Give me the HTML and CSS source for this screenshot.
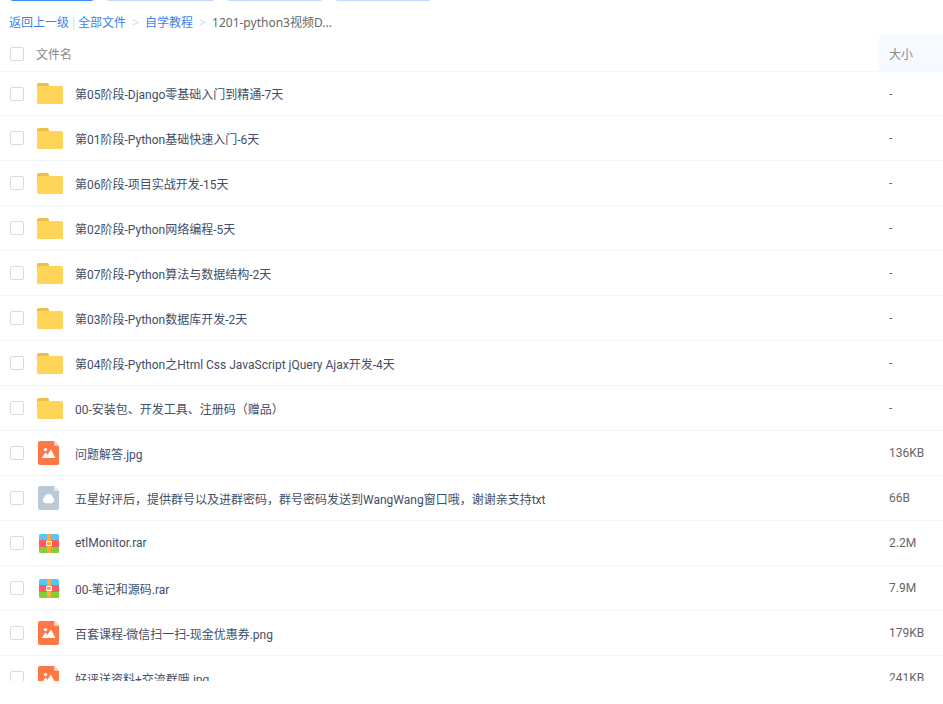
FILE: index.html
```html
<!DOCTYPE html>
<html lang="zh-CN">
<head>
  <meta charset="utf-8">
  <title>自学教程</title>
  <link rel="stylesheet" href="styles.css">
</head>
<body>
  <svg class="sprite" aria-hidden="true">
    <symbol id="folder" viewBox="0 0 26 21">
      <path fill="#eebf47" d="M0 6V1.500Q0 0 1.500 0H10.500Q12 0 12 1.500V6z"/>
      <rect width="26" height="18" y="3" rx="1.500" fill="#ffd559"/>
    </symbol>
    <symbol id="image" viewBox="0 0 21 24">
      <path fill="#ff7744" d="M2 0H16L21 5V22Q21 24 19 24H2Q0 24 0 22V2Q0 0 2 0z"/>
      <path fill="#ffc9b4" d="M16 0L21 5H17.500Q16 5 16 3.500z"/>
      <circle cx="7.500" cy="8.600" r="1.700" fill="#fff"/>
      <path fill="#fff" d="M3.600 17L7.500 11.500L9.500 13.700L13 8.500L17.400 17z"/>
    </symbol>
    <symbol id="cloud" viewBox="0 0 21 24">
      <path fill="#b9c9d6" d="M2 0H16L21 5V22Q21 24 19 24H2Q0 24 0 22V2Q0 0 2 0z"/>
      <path fill="#e3eaef" d="M16 0L21 5H17.500Q16 5 16 3.500z"/>
      <path fill="#fff" d="M8 17.200A3.200 3.200 0 0 1 6.400 11.200A4.200 4.200 0 0 1 14.600 11.200A3.200 3.200 0 0 1 13 17.200z"/>
    </symbol>
    <symbol id="rar" viewBox="0 0 20 19">
      <path fill="#55c7f7" d="M1.500 0H18.500Q20 0 20 1.500V6H0V1.500Q0 0 1.500 0z"/>
      <path fill="#ff5c5c" d="M0 6H20V13H0z"/>
      <path fill="#82cf3a" d="M0 13H20V17.500Q20 19 18.500 19H1.500Q0 19 0 17.500z"/>
      <path fill="#ffab3d" d="M8 0H12V19H8z"/>
      <path fill="#ffab3d" stroke="#fff" d="M7.500 7.500H12.500V11.500H7.500z"/>
    </symbol>
  </svg>

  <div class="toolbar">
    <button class="btn btn-primary" aria-label="上传"></button>
    <button class="btn btn-wide" aria-label="新建文件夹"></button>
    <button class="btn" aria-label="离线下载"></button>
    <button class="btn" aria-label="我的设备"></button>
  </div>

  <nav class="breadcrumb">
    <a href="#">返回上一级</a>
    <span class="divider">|</span>
    <a href="#">全部文件</a>
    <span class="arrow">&gt;</span>
    <a href="#">自学教程</a>
    <span class="arrow">&gt;</span>
    <span class="current">1201-python3视频D...</span>
  </nav>

  <div class="list">
    <table class="files">
      <thead>
        <tr>
          <th class="check"><input type="checkbox" aria-label="全选"></th>
          <th class="title">文件名</th>
          <th class="size">大小</th>
        </tr>
      </thead>
      <tbody>
        <tr>
          <td class="check"><input type="checkbox" id="f1"></td>
          <td><label class="name" for="f1"><svg class="icon folder"><use href="#folder"/></svg>第05阶段-Django零基础入门到精通-7天</label></td>
          <td class="size">-</td>
        </tr>
        <tr>
          <td class="check"><input type="checkbox" id="f2"></td>
          <td><label class="name" for="f2"><svg class="icon folder"><use href="#folder"/></svg>第01阶段-Python基础快速入门-6天</label></td>
          <td class="size">-</td>
        </tr>
        <tr>
          <td class="check"><input type="checkbox" id="f3"></td>
          <td><label class="name" for="f3"><svg class="icon folder"><use href="#folder"/></svg>第06阶段-项目实战开发-15天</label></td>
          <td class="size">-</td>
        </tr>
        <tr>
          <td class="check"><input type="checkbox" id="f4"></td>
          <td><label class="name" for="f4"><svg class="icon folder"><use href="#folder"/></svg>第02阶段-Python网络编程-5天</label></td>
          <td class="size">-</td>
        </tr>
        <tr>
          <td class="check"><input type="checkbox" id="f5"></td>
          <td><label class="name" for="f5"><svg class="icon folder"><use href="#folder"/></svg>第07阶段-Python算法与数据结构-2天</label></td>
          <td class="size">-</td>
        </tr>
        <tr>
          <td class="check"><input type="checkbox" id="f6"></td>
          <td><label class="name" for="f6"><svg class="icon folder"><use href="#folder"/></svg>第03阶段-Python数据库开发-2天</label></td>
          <td class="size">-</td>
        </tr>
        <tr>
          <td class="check"><input type="checkbox" id="f7"></td>
          <td><label class="name" for="f7"><svg class="icon folder"><use href="#folder"/></svg>第04阶段-Python之Html Css JavaScript jQuery Ajax开发-4天</label></td>
          <td class="size">-</td>
        </tr>
        <tr>
          <td class="check"><input type="checkbox" id="f8"></td>
          <td><label class="name" for="f8"><svg class="icon folder"><use href="#folder"/></svg>00-安装包、开发工具、注册码（赠品）</label></td>
          <td class="size">-</td>
        </tr>
        <tr>
          <td class="check"><input type="checkbox" id="f9"></td>
          <td><label class="name" for="f9"><svg class="icon file"><use href="#image"/></svg>问题解答.jpg</label></td>
          <td class="size">136KB</td>
        </tr>
        <tr>
          <td class="check"><input type="checkbox" id="f10"></td>
          <td><label class="name" for="f10"><svg class="icon file"><use href="#cloud"/></svg>五星好评后，提供群号以及进群密码，群号密码发送到WangWang窗口哦，谢谢亲支持txt</label></td>
          <td class="size">66B</td>
        </tr>
        <tr>
          <td class="check"><input type="checkbox" id="f11"></td>
          <td><label class="name" for="f11"><svg class="icon rar"><use href="#rar"/></svg>etlMonitor.rar</label></td>
          <td class="size">2.2M</td>
        </tr>
        <tr>
          <td class="check"><input type="checkbox" id="f12"></td>
          <td><label class="name" for="f12"><svg class="icon rar"><use href="#rar"/></svg>00-笔记和源码.rar</label></td>
          <td class="size">7.9M</td>
        </tr>
        <tr>
          <td class="check"><input type="checkbox" id="f13"></td>
          <td><label class="name" for="f13"><svg class="icon file"><use href="#image"/></svg>百套课程-微信扫一扫-现金优惠券.png</label></td>
          <td class="size">179KB</td>
        </tr>
        <tr>
          <td class="check"><input type="checkbox" id="f14"></td>
          <td><label class="name" for="f14"><svg class="icon file"><use href="#image"/></svg>好评送资料+交流群哦.jpg</label></td>
          <td class="size">241KB</td>
        </tr>
      </tbody>
    </table>
  </div>
</body>
</html>
```
FILE: styles.css
```css
body {
  margin: 0;
  height: 100vh;
  display: flex;
  flex-direction: column;
  overflow: hidden;
  background-color: #fff;
  font-family: "Noto Sans", "Noto Sans CJK SC", sans-serif;
  font-size: 12px;
  color: #424e67;
}

.sprite {
  display: none;
}

/* only the bottom edge of the toolbar stays in view */
.toolbar {
  display: flex;
  align-items: flex-end;
  flex: none;
  gap: 10px;
  height: 1px;
  padding-left: 9px;
  overflow: hidden;
}

.btn {
  flex: none;
  width: 98px;
  height: 32px;
  padding: 0;
  border: 1px solid #c0d9fe;
  border-radius: 4px;
  background-color: #fff;
}

.btn-primary {
  width: 86px;
  border-color: #3b8cff;
  background-color: #3b8cff;
}

.btn-wide {
  width: 111px;
}

.breadcrumb {
  display: flex;
  flex: none;
  height: 34px;
  padding-left: 9px;
  line-height: 44px;
  color: #666;
}

.breadcrumb a {
  color: #3b7ff0;
  text-decoration: none;
}

.breadcrumb .divider {
  width: 9px;
  text-align: center;
  color: #c4dbfe;
}

.breadcrumb .arrow {
  width: 19px;
  text-align: center;
  color: #c4dbfe;
}

.list {
  flex: 1;
  min-height: 0;
  margin-bottom: 23px;
  overflow: hidden;
}

.files {
  width: 100%;
  border-collapse: collapse;
  table-layout: fixed;
  font-family: Roboto, "Noto Sans CJK SC", sans-serif;
}

.files th,
.files td {
  height: 44px;
  padding: 0;
  border-bottom: 1px solid #f2f6fd;
  text-align: left;
  white-space: nowrap;
}

.files th {
  height: 35px;
  padding-top: 1px;
  font-weight: normal;
  color: #888;
}

.files tbody tr:first-child td {
  height: 43px;
}

.files .check {
  width: 26px;
  padding-left: 10px;
}

.files .size {
  width: 54px;
  padding-left: 10px;
}

.files td.size {
  color: #666;
}

.files th.size {
  background-color: #f6f9fe;
}

.files input {
  display: block;
  appearance: none;
  width: 14px;
  height: 14px;
  margin: 0;
  border: 1px solid #d5dbe8;
  border-radius: 2px;
  background-color: #fff;
}

.name {
  display: flex;
  align-items: center;
}

.icon {
  flex: none;
}

.folder {
  width: 26px;
  height: 21px;
  margin: 0 12px 0 1px;
}

.file {
  width: 21px;
  height: 24px;
  margin: 0 16px 0 2px;
}

.rar {
  width: 20px;
  height: 19px;
  margin: 0 16px 0 3px;
}
```
